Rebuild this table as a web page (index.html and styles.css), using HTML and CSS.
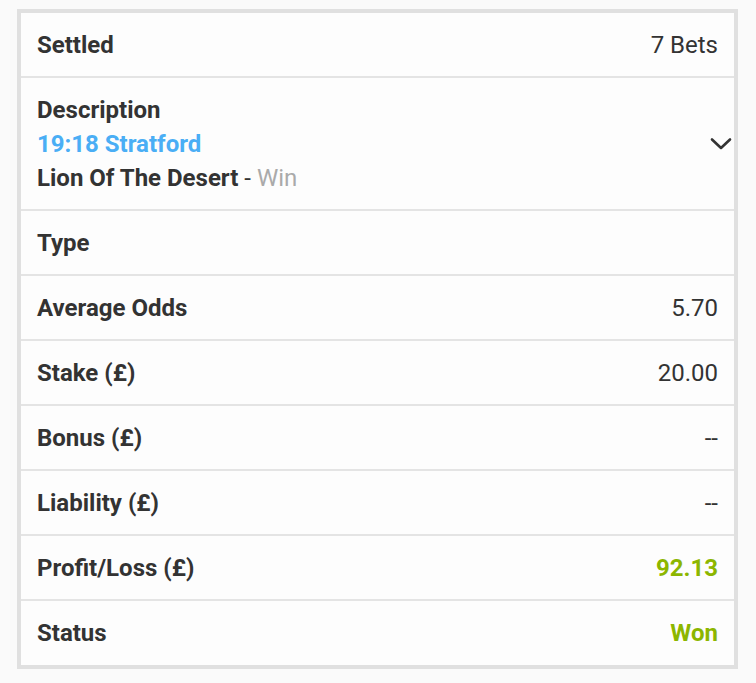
FILE: index.html
```html
<!DOCTYPE html>
<html lang="en">
<head>
<meta charset="utf-8">
<title>Settled bet</title>
<link rel="stylesheet" href="styles.css">
</head>
<body>
<div class="card">
  <div class="row">
    <span class="label">Settled</span>
    <span class="value">7 Bets</span>
  </div>
  <div class="row desc">
    <div class="desc-text">
      <div class="label">Description</div>
      <div class="event">19:18 Stratford</div>
      <div class="selection"><span class="label">Lion Of The Desert</span> - <span class="market">Win</span></div>
    </div>
    <svg class="chevron" width="22" height="14" viewBox="0 0 22 14" aria-hidden="true"><path d="M2 2.5 L11 11 L20 2.5" fill="none" stroke="#333" stroke-width="2.6" stroke-linecap="round" stroke-linejoin="round"/></svg>
  </div>
  <div class="row">
    <span class="label">Type</span>
  </div>
  <div class="row">
    <span class="label">Average Odds</span>
    <span class="value">5.70</span>
  </div>
  <div class="row">
    <span class="label">Stake (£)</span>
    <span class="value">20.00</span>
  </div>
  <div class="row">
    <span class="label">Bonus (£)</span>
    <span class="value">--</span>
  </div>
  <div class="row">
    <span class="label">Liability (£)</span>
    <span class="value">--</span>
  </div>
  <div class="row">
    <span class="label">Profit/Loss (£)</span>
    <span class="value win">92.13</span>
  </div>
  <div class="row last">
    <span class="label">Status</span>
    <span class="value win">Won</span>
  </div>
</div>
</body>
</html>
```

FILE: styles.css
```css
html, body {
  margin: 0;
  padding: 0;
  background: #fafafa;
}
body {
  font-family: Roboto, "Noto Sans", sans-serif;
  font-size: 24px;
  line-height: 34px;
  color: #333;
}
.card {
  margin: 9px 18px 0 17px;
  border: 4px solid #e0e0e0;
  background: #fdfdfd;
}
.row {
  display: flex;
  align-items: center;
  justify-content: space-between;
  padding: 15px 16px 14px 16px;
  border-bottom: 2px solid #e4e4e4;
}
.row.last {
  border-bottom: none;
  padding-bottom: 15px;
}
.label {
  font-weight: 700;
  color: #333;
}
.value {
  font-weight: 400;
  color: #333;
}
.value.win {
  font-weight: 700;
  color: #8cb600;
}
.row.desc {
  padding: 15px 2px 14px 16px;
}
.desc-text {
  flex: 1;
}
.event {
  font-weight: 700;
  color: #4aaef5;
}
.selection {
  color: #333;
}
.market {
  color: #aaa;
}
.chevron {
  display: block;
}
```
